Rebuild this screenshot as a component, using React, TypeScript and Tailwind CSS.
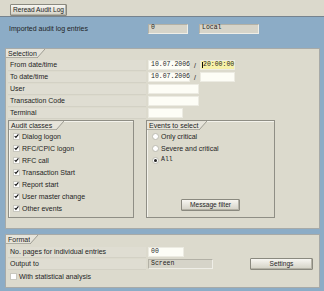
import React from "react";

function Btn({ children, w }: { children: React.ReactNode; w: string }) {
  return (
    <div
      className={`${w} h-[12px] flex items-center justify-center whitespace-nowrap text-[6.6px] rounded-[1px] border border-[#8a897f] bg-gradient-to-b from-[#f7f6f1] to-[#d3d1c5] shadow-[inset_-1px_-1px_0_#b4b2a6]`}
    >
      {children}
    </div>
  );
}

function Display({ children, w }: { children?: React.ReactNode; w: string }) {
  return (
    <div
      className={`${w} h-[10px] flex items-center pl-[2px] bg-[#d6d4c9] border-t border-l border-[#b3b1a6] border-b-[#efeee7] border-r-[#efeee7] border-b border-r font-['Liberation_Mono',monospace] text-[6.5px]`}
    >
      {children}
    </div>
  );
}

function Input({ children, w, yellow }: { children?: React.ReactNode; w: string; yellow?: boolean }) {
  return (
    <div
      className={`${w} h-[10px] flex items-center pl-[2px] ${yellow ? "bg-[#f7f1a8]" : "bg-[#fdfdf6]"} border border-[#ecebe2] font-['Liberation_Mono',monospace] text-[6.5px]`}
    >
      {children}
    </div>
  );
}

function Tab({ label, w }: { label: string; w: string }) {
  return (
    <div className="flex h-[9px] shrink-0">
      <div className={`${w} bg-[#e6e4da] border-b border-[#aeada2] pl-[2px] flex items-center whitespace-nowrap`}>{label}</div>
      <svg width="8" height="9" className="block">
        <polygon points="0,0 8,0 0,9" fill="#e6e4da" />
        <line x1="0" y1="9" x2="8" y2="0" stroke="#9d9c92" strokeWidth="1" />
      </svg>
    </div>
  );
}

function Label({ children }: { children: React.ReactNode }) {
  return (
    <div className="ml-[2px] w-[138px] h-[11px] flex items-center pl-[2px] bg-[#dfddd2] border-b border-[#d3d1c5]">
      {children}
    </div>
  );
}

function Check({ checked }: { checked: boolean }) {
  return (
    <div className="w-[7px] h-[7px] bg-white border border-[#c9c8bf] flex items-center justify-center shrink-0">
      {checked && (
        <svg width="6" height="6" viewBox="0 0 6 6" className="block">
          <polyline points="0.8,3 2.3,4.6 5.3,1" fill="none" stroke="#111" strokeWidth="1.3" />
        </svg>
      )}
    </div>
  );
}

function Radio({ on }: { on: boolean }) {
  return (
    <div className="w-[7px] h-[7px] rounded-full bg-white border border-[#bcbbb1] flex items-center justify-center shrink-0">
      {on && <div className="w-[3px] h-[3px] rounded-full bg-[#222]" />}
    </div>
  );
}

export default function App() {
  const classes = [
    "Dialog logon",
    "RFC/CPIC logon",
    "RFC call",
    "Transaction Start",
    "Report start",
    "User master change",
    "Other events",
  ];
  return (
    <div className="w-[324px] h-[291px] bg-[#8cacc6] overflow-hidden flex flex-col text-[7px] leading-none text-[#1e1e1e] font-['Liberation_Sans',Arial,sans-serif]">
      {/* toolbar */}
      <div className="h-[17px] shrink-0 bg-[#dbd9cc] border-b border-[#76838e] flex items-start pl-[10px] pt-[4px]">
        <Btn w="w-[57px]">Reread Audit Log</Btn>
      </div>

      {/* imported row */}
      <div className="mt-[6px] h-[11px] shrink-0 flex items-center">
        <div className="ml-[5px] w-[143px] h-[11px] flex items-center pl-[4px]">Imported audit log entries</div>
        <Display w="w-[40px]">0</Display>
        <div className="w-[11px]" />
        <Display w="w-[60px]">Local</Display>
      </div>

      {/* Selection panel */}
      <div className="mt-[14px] ml-[5px] w-[315px] h-[181px] shrink-0 bg-[#dcdacd] border border-[#a7aaa8] flex flex-col">
        <Tab label="Selection" w="w-[31px]" />
        <div className="h-[1px]" />
        <div className="h-[12px] flex items-center">
          <Label>From date/time</Label>
          <div className="w-[2px]" />
          <Input w="w-[42px]">10.07.2006</Input>
          <div className="w-[10px] text-center">/</div>
          <Input w="w-[35px]" yellow>
            <span className="border-l border-[#111] -ml-[1px]">20:00:00</span>
          </Input>
        </div>
        <div className="h-[12px] flex items-center">
          <Label>To date/time</Label>
          <div className="w-[2px]" />
          <Input w="w-[42px]">10.07.2006</Input>
          <div className="w-[10px] text-center">/</div>
          <Input w="w-[35px]" />
        </div>
        <div className="h-[12px] flex items-center">
          <Label>User</Label>
          <div className="w-[2px]" />
          <Input w="w-[51px]" />
        </div>
        <div className="h-[12px] flex items-center">
          <Label>Transaction Code</Label>
          <div className="w-[2px]" />
          <Input w="w-[51px]" />
        </div>
        <div className="h-[12px] flex items-center">
          <Label>Terminal</Label>
          <div className="w-[2px]" />
          <Input w="w-[35px]" />
        </div>

        <div className="mt-[1px] flex gap-[12px] pl-[2px]">
          {/* Audit classes */}
          <div className="w-[126px] h-[98px] border border-[#8f8e85] shadow-[inset_1px_1px_0_#f4f3ec] flex flex-col">
            <Tab label="Audit classes" w="w-[47px]" />
            <div className="flex flex-col pl-[4px]">
              {classes.map((c) => (
                <div key={c} className="h-[12px] flex items-center gap-[2px]">
                  <Check checked />
                  <span>{c}</span>
                </div>
              ))}
            </div>
          </div>

          {/* Events to select */}
          <div className="w-[129px] h-[98px] border border-[#8f8e85] shadow-[inset_1px_1px_0_#f4f3ec] flex flex-col">
            <Tab label="Events to select" w="w-[52px]" />
            <div className="flex flex-col pl-[5px]">
              <div className="h-[12px] flex items-center gap-[2px]">
                <Radio on={false} />
                <span>Only critical</span>
              </div>
              <div className="h-[12px] flex items-center gap-[2px]">
                <Radio on={false} />
                <span>Severe and critical</span>
              </div>
              <div className="h-[12px] flex items-center gap-[2px]">
                <Radio on />
                <span className="font-['Liberation_Mono',monospace] text-[6.5px]">All</span>
              </div>
            </div>
            <div className="mt-auto mb-[6px] self-center">
              <Btn w="w-[59px]">Message filter</Btn>
            </div>
          </div>
        </div>
      </div>

      {/* Format panel */}
      <div className="mt-[5px] ml-[5px] w-[315px] h-[54px] shrink-0 bg-[#dcdacd] border border-[#a7aaa8] flex flex-col">
        <Tab label="Format" w="w-[24px]" />
        <div className="h-[2px]" />
        <div className="h-[12px] flex items-center">
          <Label>No. pages for individual entries</Label>
          <div className="w-[2px]" />
          <Input w="w-[36px]">00</Input>
        </div>
        <div className="h-[12px] flex items-center">
          <Label>Output to</Label>
          <div className="w-[2px]" />
          <Display w="w-[65px]">Screen</Display>
          <div className="ml-auto mr-[6px]">
            <Btn w="w-[63px]">Settings</Btn>
          </div>
        </div>
        <div className="h-[12px] flex items-center pl-[4px] gap-[2px]">
          <Check checked={false} />
          <span>With statistical analysis</span>
        </div>
      </div>
    </div>
  );
}
